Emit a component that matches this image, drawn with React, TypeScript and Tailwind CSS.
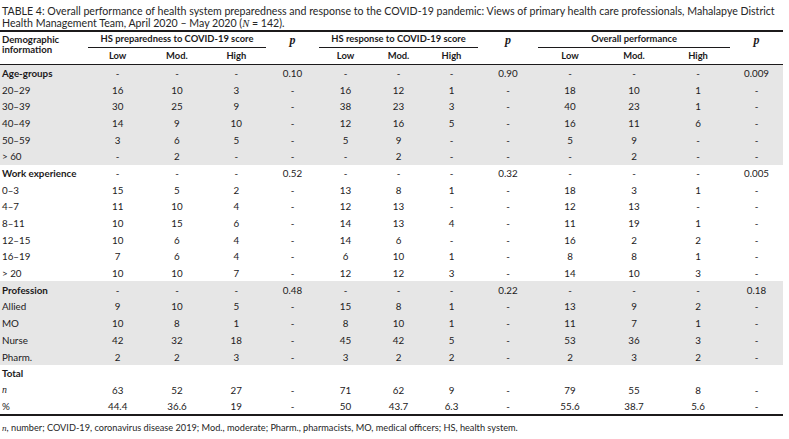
import React from "react";

type Row = { label: string; bold?: boolean; italic?: boolean; vals: string[] };

const groups: { shaded: boolean; rows: Row[] }[] = [
  {
    shaded: true,
    rows: [
      { label: "Age-groups", bold: true, vals: ["-", "-", "-", "0.10", "-", "-", "-", "0.90", "-", "-", "-", "0.009"] },
      { label: "20–29", vals: ["16", "10", "3", "-", "16", "12", "1", "-", "18", "10", "1", "-"] },
      { label: "30–39", vals: ["30", "25", "9", "-", "38", "23", "3", "-", "40", "23", "1", "-"] },
      { label: "40–49", vals: ["14", "9", "10", "-", "12", "16", "5", "-", "16", "11", "6", "-"] },
      { label: "50–59", vals: ["3", "6", "5", "-", "5", "9", "-", "-", "5", "9", "-", "-"] },
      { label: "> 60", vals: ["-", "2", "-", "-", "-", "2", "-", "-", "-", "2", "-", "-"] },
    ],
  },
  {
    shaded: false,
    rows: [
      { label: "Work experience", bold: true, vals: ["-", "-", "-", "0.52", "-", "-", "-", "0.32", "-", "-", "-", "0.005"] },
      { label: "0–3", vals: ["15", "5", "2", "-", "13", "8", "1", "-", "18", "3", "1", "-"] },
      { label: "4–7", vals: ["11", "10", "4", "-", "12", "13", "-", "-", "12", "13", "-", "-"] },
      { label: "8–11", vals: ["10", "15", "6", "-", "14", "13", "4", "-", "11", "19", "1", "-"] },
      { label: "12–15", vals: ["10", "6", "4", "-", "14", "6", "-", "-", "16", "2", "2", "-"] },
      { label: "16–19", vals: ["7", "6", "4", "-", "6", "10", "1", "-", "8", "8", "1", "-"] },
      { label: "> 20", vals: ["10", "10", "7", "-", "12", "12", "3", "-", "14", "10", "3", "-"] },
    ],
  },
  {
    shaded: true,
    rows: [
      { label: "Profession", bold: true, vals: ["-", "-", "-", "0.48", "-", "-", "-", "0.22", "-", "-", "-", "0.18"] },
      { label: "Allied", vals: ["9", "10", "5", "-", "15", "8", "1", "-", "13", "9", "2", "-"] },
      { label: "MO", vals: ["10", "8", "1", "-", "8", "10", "1", "-", "11", "7", "1", "-"] },
      { label: "Nurse", vals: ["42", "32", "18", "-", "45", "42", "5", "-", "53", "36", "3", "-"] },
      { label: "Pharm.", vals: ["2", "2", "3", "-", "3", "2", "2", "-", "2", "3", "2", "-"] },
    ],
  },
  {
    shaded: false,
    rows: [
      { label: "Total", bold: true, vals: ["", "", "", "", "", "", "", "", "", "", "", ""] },
      { label: "n", italic: true, vals: ["63", "52", "27", "-", "71", "62", "9", "-", "79", "55", "8", "-"] },
      { label: "%", vals: ["44.4", "36.6", "19", "-", "50", "43.7", "6.3", "-", "55.6", "38.7", "5.6", "-"] },
    ],
  },
];

const widths = [88, 59.3, 59.3, 59.4, 53, 53, 53, 53, 60, 64, 64, 64, 53];

const P = () => (
  <span className="font-['Liberation_Serif',serif] italic font-bold text-[12px]">p</span>
);

export default function App() {
  return (
    <div className="w-[789px] h-[439px] bg-white text-[#1c1a1b] font-['Lato',sans-serif] overflow-hidden">
      <div className="pl-[2px] pt-[5px] text-[10.6px] leading-[12.4px] text-[#262626] w-[789px] h-[30px] whitespace-nowrap">
        TABLE 4: Overall performance of health system preparedness and response to the COVID-19 pandemic: Views of primary health care professionals, Mahalapye District
        <br />
        Health Management Team, April 2020 – May 2020 (
        <span className="font-['Liberation_Serif',serif] italic">N</span> = 142).
      </div>
      <table className="table-fixed border-collapse w-[783px] border-t-2 border-[#1c1a1b] text-[9.8px]">
        <colgroup>
          {widths.map((w, i) => (
            <col key={i} style={{ width: w }} />
          ))}
        </colgroup>
        <thead>
          <tr className="h-[16px]">
            <th rowSpan={2} className="text-left align-top font-bold text-[9.6px] leading-[10.4px] pl-[2px] pt-[3px] p-0 border-b border-[#1c1a1b]">
              Demographic
              <br />
              information
            </th>
            <th colSpan={3} className="font-bold text-[9.4px] p-0 border-b border-[#1c1a1b] leading-[12px]">
              HS preparedness to COVID-19 score
            </th>
            <th rowSpan={2} className="align-top p-0 pt-[1px] border-b border-[#1c1a1b] leading-[14px]">
              <P />
            </th>
            <th colSpan={3} className="font-bold text-[9.4px] p-0 border-b border-[#1c1a1b] leading-[12px]">
              HS response to COVID-19 score
            </th>
            <th rowSpan={2} className="align-top p-0 pt-[1px] border-b border-[#1c1a1b] leading-[14px]">
              <P />
            </th>
            <th colSpan={3} className="font-bold text-[9.4px] p-0 border-b border-[#1c1a1b] leading-[12px]">
              Overall performance
            </th>
            <th rowSpan={2} className="align-top p-0 pt-[1px] border-b border-[#1c1a1b] leading-[14px]">
              <P />
            </th>
          </tr>
          <tr className="h-[17.5px]">
            {["Low", "Mod.", "High", "Low", "Mod.", "High", "Low", "Mod.", "High"].map((t, i) => (
              <th key={i} className="font-bold text-[9.4px] p-0 leading-[12px] border-b border-[#1c1a1b]">
                {t}
              </th>
            ))}
          </tr>
        </thead>
        <tbody className="border-b-2 border-[#1c1a1b]">
          {groups.flatMap((g, gi) =>
            g.rows.map((r, ri) => (
              <tr key={`${gi}-${ri}`} className={`h-[16.7px] ${g.shaded ? "bg-[#e6e6e6]" : ""}`}>
                <td
                  className={`p-0 pl-[2px] leading-[12px] whitespace-nowrap ${r.bold ? "font-bold" : ""} ${
                    r.italic ? "font-['Liberation_Serif',serif] italic" : ""
                  }`}
                >
                  {r.label}
                </td>
                {r.vals.map((v, vi) => (
                  <td key={vi} className="p-0 text-center leading-[12px]">
                    {v}
                  </td>
                ))}
              </tr>
            ))
          )}
        </tbody>
      </table>
      <div className="pl-[2px] pt-[7px] text-[9.2px] leading-[10px] text-[#262626]">
        <span className="font-['Liberation_Serif',serif] italic">n</span>, number; COVID-19, coronavirus disease 2019; Mod., moderate; Pharm., pharmacists, MO, medical officers; HS, health system.
      </div>
    </div>
  );
}
